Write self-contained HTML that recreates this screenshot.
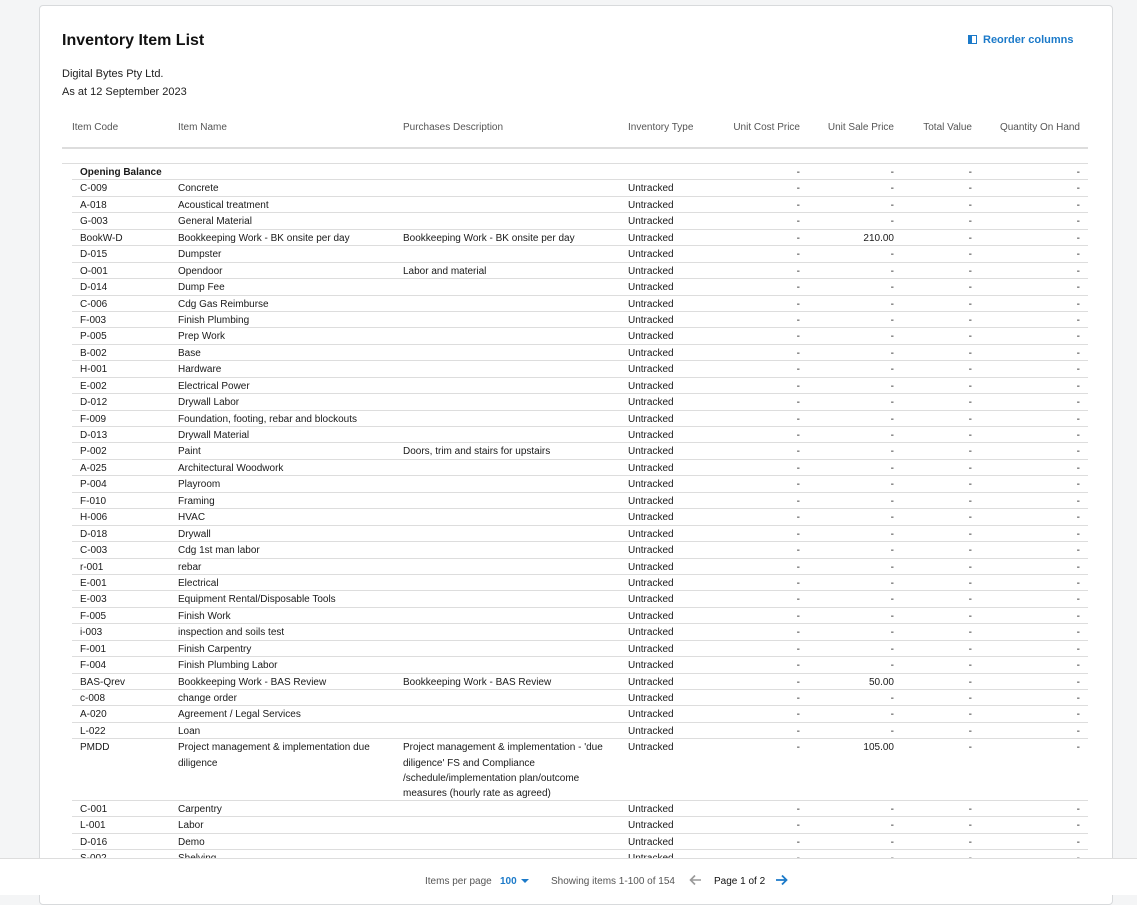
<!DOCTYPE html>
<html><head><meta charset="utf-8"><style>
*{box-sizing:border-box;margin:0;padding:0}
body{width:1137px;height:895px;overflow:hidden;background:#f4f5f6;font-family:"Liberation Sans",sans-serif;color:#1a1a1a;position:relative}
.card{position:absolute;left:39px;top:5px;width:1074px;height:900px;background:#fff;border:1px solid #d8dadc;border-radius:4px}
h1{position:absolute;left:62px;top:32px;font-size:16px;font-weight:bold;color:#111}
.sub{position:absolute;left:62px;font-size:11px;color:#222}
.reo{position:absolute;left:968px;top:33px;font-size:11px;font-weight:bold;color:#1c7ac9}
.reo i{display:inline-block;width:9px;height:9px;border:1.5px solid #1c7ac9;border-left-width:4px;vertical-align:-1px;margin-right:6px}
.hdr{position:absolute;left:62px;top:116px;width:1026px;height:33px;border-bottom:2px solid #ddd;font-size:10px;color:#555}
.hdr span,.r span{position:absolute;white-space:nowrap}
.hdr span{top:6px}
.rows{position:absolute;left:62px;top:163px;width:1026px;border-top:1px solid #ddd}
.r{position:relative;height:16.45px;border-bottom:1px solid #ddd;margin-left:10px;font-size:10px;line-height:15px}
.r span{top:1px}
.c1{left:8px}.c2{left:106px}.c3{left:331px}.c4{left:556px}
.c5{right:288px}.c6{right:194px}.c7{right:116px}.c8{right:8px}
.foot{position:absolute;left:0;top:858px;width:1137px;height:37px;background:#fff;border-top:1px solid #ddd;font-size:10px;color:#555}
.foot span{position:absolute;top:16px;white-space:nowrap}
.foot svg{position:absolute;top:16px}
</style></head><body>
<div class="card"></div>
<h1>Inventory Item List</h1>
<div class="sub" style="top:68px">Digital Bytes Pty Ltd.</div>
<div class="sub" style="top:86px">As at 12 September 2023</div>
<div class="reo" style="top:34px"><i></i>Reorder columns</div>
<div class="hdr">
<span style="left:10px">Item Code</span><span style="left:116px">Item Name</span><span style="left:341px">Purchases Description</span><span style="left:566px">Inventory Type</span>
<span style="right:288px">Unit Cost Price</span><span style="right:194px">Unit Sale Price</span><span style="right:116px">Total Value</span><span style="right:8px">Quantity On Hand</span>
</div>
<div class="rows">
<div class="r"><span class="c1" style="font-weight:bold">Opening Balance</span><span class="c5">-</span><span class="c6">-</span><span class="c7">-</span><span class="c8">-</span></div>
<div class="r"><span class="c1">C-009</span><span class="c2">Concrete</span><span class="c4">Untracked</span><span class="c5">-</span><span class="c6">-</span><span class="c7">-</span><span class="c8">-</span></div>
<div class="r"><span class="c1">A-018</span><span class="c2">Acoustical treatment</span><span class="c4">Untracked</span><span class="c5">-</span><span class="c6">-</span><span class="c7">-</span><span class="c8">-</span></div>
<div class="r"><span class="c1">G-003</span><span class="c2">General Material</span><span class="c4">Untracked</span><span class="c5">-</span><span class="c6">-</span><span class="c7">-</span><span class="c8">-</span></div>
<div class="r"><span class="c1">BookW-D</span><span class="c2">Bookkeeping Work - BK onsite per day</span><span class="c3">Bookkeeping Work - BK onsite per day</span><span class="c4">Untracked</span><span class="c5">-</span><span class="c6">210.00</span><span class="c7">-</span><span class="c8">-</span></div>
<div class="r"><span class="c1">D-015</span><span class="c2">Dumpster</span><span class="c4">Untracked</span><span class="c5">-</span><span class="c6">-</span><span class="c7">-</span><span class="c8">-</span></div>
<div class="r"><span class="c1">O-001</span><span class="c2">Opendoor</span><span class="c3">Labor and material</span><span class="c4">Untracked</span><span class="c5">-</span><span class="c6">-</span><span class="c7">-</span><span class="c8">-</span></div>
<div class="r"><span class="c1">D-014</span><span class="c2">Dump Fee</span><span class="c4">Untracked</span><span class="c5">-</span><span class="c6">-</span><span class="c7">-</span><span class="c8">-</span></div>
<div class="r"><span class="c1">C-006</span><span class="c2">Cdg Gas Reimburse</span><span class="c4">Untracked</span><span class="c5">-</span><span class="c6">-</span><span class="c7">-</span><span class="c8">-</span></div>
<div class="r"><span class="c1">F-003</span><span class="c2">Finish Plumbing</span><span class="c4">Untracked</span><span class="c5">-</span><span class="c6">-</span><span class="c7">-</span><span class="c8">-</span></div>
<div class="r"><span class="c1">P-005</span><span class="c2">Prep Work</span><span class="c4">Untracked</span><span class="c5">-</span><span class="c6">-</span><span class="c7">-</span><span class="c8">-</span></div>
<div class="r"><span class="c1">B-002</span><span class="c2">Base</span><span class="c4">Untracked</span><span class="c5">-</span><span class="c6">-</span><span class="c7">-</span><span class="c8">-</span></div>
<div class="r"><span class="c1">H-001</span><span class="c2">Hardware</span><span class="c4">Untracked</span><span class="c5">-</span><span class="c6">-</span><span class="c7">-</span><span class="c8">-</span></div>
<div class="r"><span class="c1">E-002</span><span class="c2">Electrical Power</span><span class="c4">Untracked</span><span class="c5">-</span><span class="c6">-</span><span class="c7">-</span><span class="c8">-</span></div>
<div class="r"><span class="c1">D-012</span><span class="c2">Drywall Labor</span><span class="c4">Untracked</span><span class="c5">-</span><span class="c6">-</span><span class="c7">-</span><span class="c8">-</span></div>
<div class="r"><span class="c1">F-009</span><span class="c2">Foundation, footing, rebar and blockouts</span><span class="c4">Untracked</span><span class="c5">-</span><span class="c6">-</span><span class="c7">-</span><span class="c8">-</span></div>
<div class="r"><span class="c1">D-013</span><span class="c2">Drywall Material</span><span class="c4">Untracked</span><span class="c5">-</span><span class="c6">-</span><span class="c7">-</span><span class="c8">-</span></div>
<div class="r"><span class="c1">P-002</span><span class="c2">Paint</span><span class="c3">Doors, trim and stairs for upstairs</span><span class="c4">Untracked</span><span class="c5">-</span><span class="c6">-</span><span class="c7">-</span><span class="c8">-</span></div>
<div class="r"><span class="c1">A-025</span><span class="c2">Architectural Woodwork</span><span class="c4">Untracked</span><span class="c5">-</span><span class="c6">-</span><span class="c7">-</span><span class="c8">-</span></div>
<div class="r"><span class="c1">P-004</span><span class="c2">Playroom</span><span class="c4">Untracked</span><span class="c5">-</span><span class="c6">-</span><span class="c7">-</span><span class="c8">-</span></div>
<div class="r"><span class="c1">F-010</span><span class="c2">Framing</span><span class="c4">Untracked</span><span class="c5">-</span><span class="c6">-</span><span class="c7">-</span><span class="c8">-</span></div>
<div class="r"><span class="c1">H-006</span><span class="c2">HVAC</span><span class="c4">Untracked</span><span class="c5">-</span><span class="c6">-</span><span class="c7">-</span><span class="c8">-</span></div>
<div class="r"><span class="c1">D-018</span><span class="c2">Drywall</span><span class="c4">Untracked</span><span class="c5">-</span><span class="c6">-</span><span class="c7">-</span><span class="c8">-</span></div>
<div class="r"><span class="c1">C-003</span><span class="c2">Cdg 1st man labor</span><span class="c4">Untracked</span><span class="c5">-</span><span class="c6">-</span><span class="c7">-</span><span class="c8">-</span></div>
<div class="r"><span class="c1">r-001</span><span class="c2">rebar</span><span class="c4">Untracked</span><span class="c5">-</span><span class="c6">-</span><span class="c7">-</span><span class="c8">-</span></div>
<div class="r"><span class="c1">E-001</span><span class="c2">Electrical</span><span class="c4">Untracked</span><span class="c5">-</span><span class="c6">-</span><span class="c7">-</span><span class="c8">-</span></div>
<div class="r"><span class="c1">E-003</span><span class="c2">Equipment Rental/Disposable Tools</span><span class="c4">Untracked</span><span class="c5">-</span><span class="c6">-</span><span class="c7">-</span><span class="c8">-</span></div>
<div class="r"><span class="c1">F-005</span><span class="c2">Finish Work</span><span class="c4">Untracked</span><span class="c5">-</span><span class="c6">-</span><span class="c7">-</span><span class="c8">-</span></div>
<div class="r"><span class="c1">i-003</span><span class="c2">inspection and soils test</span><span class="c4">Untracked</span><span class="c5">-</span><span class="c6">-</span><span class="c7">-</span><span class="c8">-</span></div>
<div class="r"><span class="c1">F-001</span><span class="c2">Finish Carpentry</span><span class="c4">Untracked</span><span class="c5">-</span><span class="c6">-</span><span class="c7">-</span><span class="c8">-</span></div>
<div class="r"><span class="c1">F-004</span><span class="c2">Finish Plumbing Labor</span><span class="c4">Untracked</span><span class="c5">-</span><span class="c6">-</span><span class="c7">-</span><span class="c8">-</span></div>
<div class="r"><span class="c1">BAS-Qrev</span><span class="c2">Bookkeeping Work - BAS Review</span><span class="c3">Bookkeeping Work - BAS Review</span><span class="c4">Untracked</span><span class="c5">-</span><span class="c6">50.00</span><span class="c7">-</span><span class="c8">-</span></div>
<div class="r"><span class="c1">c-008</span><span class="c2">change order</span><span class="c4">Untracked</span><span class="c5">-</span><span class="c6">-</span><span class="c7">-</span><span class="c8">-</span></div>
<div class="r"><span class="c1">A-020</span><span class="c2">Agreement / Legal Services</span><span class="c4">Untracked</span><span class="c5">-</span><span class="c6">-</span><span class="c7">-</span><span class="c8">-</span></div>
<div class="r"><span class="c1">L-022</span><span class="c2">Loan</span><span class="c4">Untracked</span><span class="c5">-</span><span class="c6">-</span><span class="c7">-</span><span class="c8">-</span></div>
<div class="r" style="height:61.6px;line-height:15.3px"><span class="c1">PMDD</span><span class="c2" style="white-space:normal;width:215px">Project management &amp; implementation due diligence</span><span class="c3" style="white-space:normal;width:200px">Project management &amp; implementation - 'due diligence' FS and Compliance /schedule/implementation plan/outcome measures (hourly rate as agreed)</span><span class="c4">Untracked</span><span class="c5">-</span><span class="c6">105.00</span><span class="c7">-</span><span class="c8">-</span></div>
<div class="r"><span class="c1">C-001</span><span class="c2">Carpentry</span><span class="c4">Untracked</span><span class="c5">-</span><span class="c6">-</span><span class="c7">-</span><span class="c8">-</span></div>
<div class="r"><span class="c1">L-001</span><span class="c2">Labor</span><span class="c4">Untracked</span><span class="c5">-</span><span class="c6">-</span><span class="c7">-</span><span class="c8">-</span></div>
<div class="r"><span class="c1">D-016</span><span class="c2">Demo</span><span class="c4">Untracked</span><span class="c5">-</span><span class="c6">-</span><span class="c7">-</span><span class="c8">-</span></div>
<div class="r"><span class="c1">S-002</span><span class="c2">Shelving</span><span class="c4">Untracked</span><span class="c5">-</span><span class="c6">-</span><span class="c7">-</span><span class="c8">-</span></div>
</div>
<div class="foot">
<span style="left:425px;top:17px">Items per page</span>
<span style="left:500px;top:17px;color:#1c7ac9;font-weight:bold">100</span>
<svg style="left:521px;top:19px" width="8" height="6"><path d="M0 1h8L4 5z" fill="#1c7ac9"/></svg>
<span style="left:551px;top:17px">Showing items 1-100 of 154</span>
<svg style="left:689px;top:15px" width="13" height="12"><path d="M12 6H2M6 1.5L1.5 6 6 10.5" stroke="#999" stroke-width="1.6" fill="none"/></svg>
<span style="left:714px;top:17px;color:#111">Page 1 of 2</span>
<svg style="left:775px;top:15px" width="13" height="12"><path d="M1 6h10M7 1.5L11.5 6 7 10.5" stroke="#1c7ac9" stroke-width="1.8" fill="none"/></svg>
</div>
</body></html>
